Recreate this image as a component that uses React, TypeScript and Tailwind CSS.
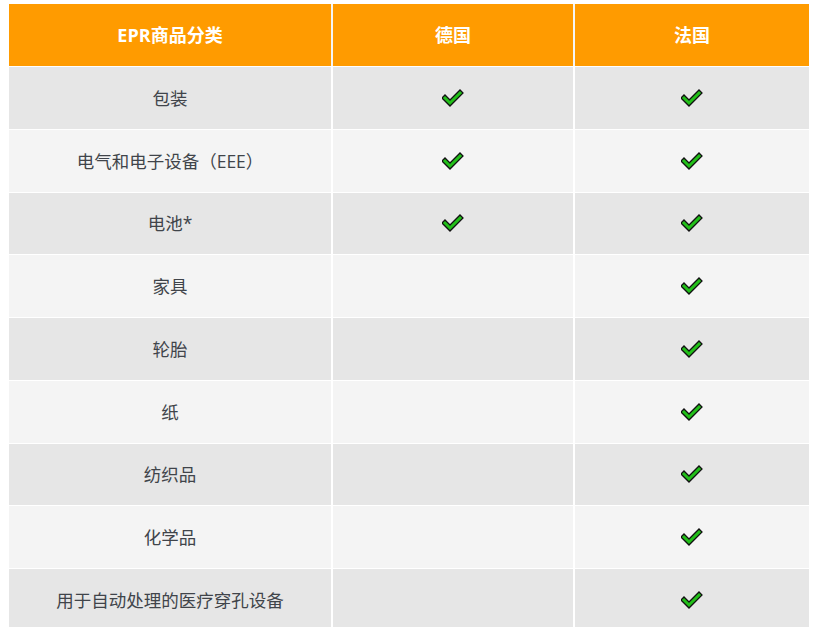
const rows: { name: string; de: boolean; fr: boolean }[] = [
  { name: "包装", de: true, fr: true },
  { name: "电气和电子设备（EEE）", de: true, fr: true },
  { name: "电池*", de: true, fr: true },
  { name: "家具", de: false, fr: true },
  { name: "轮胎", de: false, fr: true },
  { name: "纸", de: false, fr: true },
  { name: "纺织品", de: false, fr: true },
  { name: "化学品", de: false, fr: true },
  { name: "用于自动处理的医疗穿孔设备", de: false, fr: true },
];

function Check() {
  return (
    <svg width="22" height="18" viewBox="0 0 22 18">
      <polyline
        points="3,9 8,14 18,4"
        fill="none"
        stroke="#111"
        strokeWidth="5.5"
        strokeLinecap="square"
        strokeLinejoin="miter"
      />
      <polyline
        points="3,9 8,14 18,4"
        fill="none"
        stroke="#22c019"
        strokeWidth="3"
        strokeLinecap="square"
        strokeLinejoin="miter"
      />
    </svg>
  );
}

export default function App() {
  return (
    <main
      className="w-[813px] h-[627px] overflow-hidden bg-white pt-[4px] pl-[9px]"
      style={{ fontFamily: '"Open Sans", "Noto Sans CJK SC", sans-serif' }}
    >
      <div className="w-[800px]">
        {/* Header */}
        <div className="flex h-[63px] border-b border-white bg-[#ff9b00] text-white font-bold text-[18px]">
          <div className="w-[324px] flex items-center justify-center border-r-2 border-[#f5f5f5]">
            EPR商品分类
          </div>
          <div className="w-[242px] flex items-center justify-center border-r-2 border-[#f5f5f5]">
            德国
          </div>
          <div className="flex-1 flex items-center justify-center">法国</div>
        </div>

        {/* Rows */}
        {rows.map((r, i) => (
          <div
            key={r.name}
            className={`flex h-[62.75px] border-b border-white text-[17.5px] text-[#40444a] ${
              i % 2 === 0 ? "bg-[#e6e6e6]" : "bg-[#f4f4f4]"
            }`}
          >
            <div className="w-[324px] flex items-center justify-center border-r-2 border-white">
              {r.name}
            </div>
            <div className="w-[242px] flex items-center justify-center border-r-2 border-white">
              {r.de && <Check />}
            </div>
            <div className="flex-1 flex items-center justify-center">
              {r.fr && <Check />}
            </div>
          </div>
        ))}
      </div>
    </main>
  );
}
